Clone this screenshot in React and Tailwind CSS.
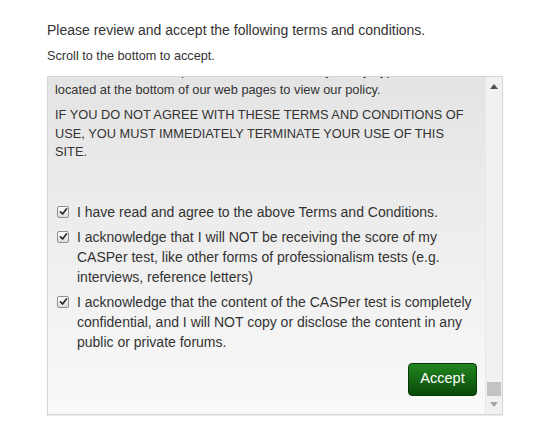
const items = [
    "I have read and agree to the above Terms and Conditions.",
    "I acknowledge that I will NOT be receiving the score of my CASPer test, like other forms of professionalism tests (e.g. interviews, reference letters)",
    "I acknowledge that the content of the CASPer test is completely confidential, and I will NOT copy or disclose the content in any public or private forums.",
];

const CheckMark = () => (
    <span className="mt-[4px] flex h-[12px] w-[12px] shrink-0 items-center justify-center rounded-[2px] border border-[#8f8f8f] bg-gradient-to-b from-[#ffffff] to-[#dcdcdc]">
        <svg width="9" height="9" viewBox="0 0 9 9">
            <path d="M1.5 4.8 L3.6 7 L7.6 1.8" fill="none" stroke="#2b2b2b" strokeWidth="1.7" strokeLinecap="round" strokeLinejoin="round" />
        </svg>
    </span>
);

export default function App() {
    return (
        <div className="h-[441px] w-[542px] bg-white pl-[47px] pt-[20px] text-[#333333]" style={{ fontFamily: '"Liberation Sans", Arial, sans-serif' }}>
            <h1 className="text-[14px] leading-[20px]">Please review and accept the following terms and conditions.</h1>
            <p className="mt-[7px] text-[12.7px] leading-[18px]">Scroll to the bottom to accept.</p>

            <div className="mt-[11px] flex h-[339px] w-[456px] overflow-hidden border border-[#d6d6d6] bg-gradient-to-b from-[#e4e4e4] to-[#f9f9f9] shadow-[0_1px_1px_rgba(0,0,0,0.08)]">
                <div className="flex-1 overflow-hidden pl-[7px] pr-[8px]">
                    <p className="mt-[-16px] text-[12.8px] leading-[19px]">
                        For more information, please click on the Privacy Policy hyperlink
                        <br />
                        located at the bottom of our web pages to view our policy.
                    </p>
                    <p className="mt-[7px] text-[12.8px] leading-[18.5px]">
                        IF YOU DO NOT AGREE WITH THESE TERMS AND CONDITIONS OF
                        <br />
                        USE, YOU MUST IMMEDIATELY TERMINATE YOUR USE OF THIS
                        <br />
                        SITE.
                    </p>

                    <ul className="mt-[40px] flex flex-col gap-[5px] pl-[2px]">
                        {items.map((text, i) => (
                            <li key={i} className="flex gap-[8px] text-[14px] leading-[20px]">
                                <CheckMark />
                                <span>{text}</span>
                            </li>
                        ))}
                    </ul>

                    <div className="mt-[11px] flex justify-end">
                        <button className="h-[33px] w-[69px] rounded-[4px] border border-[#063806] bg-gradient-to-b from-[#21861f] to-[#0a4a0a] text-[14.5px] text-white">
                            Accept
                        </button>
                    </div>
                </div>

                <div className="flex w-[17px] flex-col items-center border-l border-[#e8e8e8] bg-[#f1f1f1]">
                    <svg className="mt-[7px]" width="8" height="5" viewBox="0 0 8 5"><path d="M0 5 L4 0 L8 5 Z" fill="#505050" /></svg>
                    <div className="flex-1" />
                    <div className="h-[14px] w-[14px] bg-[#c3c3c3]" />
                    <svg className="mb-[7px] mt-[6px]" width="8" height="5" viewBox="0 0 8 5"><path d="M0 0 L8 0 L4 5 Z" fill="#a3a3a3" /></svg>
                </div>
            </div>
        </div>
    );
}
